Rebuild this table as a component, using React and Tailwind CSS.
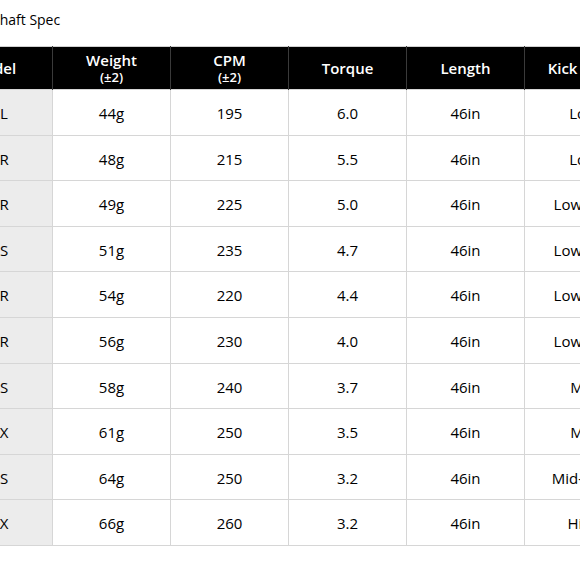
const rows = [
  { model: '40 L', weight: '44g', cpm: '195', torque: '6.0', length: '46in', kick: 'Low' },
  { model: '40 R', weight: '48g', cpm: '215', torque: '5.5', length: '46in', kick: 'Low' },
  { model: '50 R', weight: '49g', cpm: '225', torque: '5.0', length: '46in', kick: 'Low-Mid' },
  { model: '50 S', weight: '51g', cpm: '235', torque: '4.7', length: '46in', kick: 'Low-Mid' },
  { model: '55 R', weight: '54g', cpm: '220', torque: '4.4', length: '46in', kick: 'Low-Mid' },
  { model: '55 R', weight: '56g', cpm: '230', torque: '4.0', length: '46in', kick: 'Low-Mid' },
  { model: '60 S', weight: '58g', cpm: '240', torque: '3.7', length: '46in', kick: 'Mid' },
  { model: '60 X', weight: '61g', cpm: '250', torque: '3.5', length: '46in', kick: 'Mid' },
  { model: '65 S', weight: '64g', cpm: '250', torque: '3.2', length: '46in', kick: 'Mid-High' },
  { model: '65 X', weight: '66g', cpm: '260', torque: '3.2', length: '46in', kick: 'High' },
];

function HeadCell({ title, sub }) {
  return <th className="w-[118px] border-x border-[#3a3a3a] p-0 text-center align-middle font-semibold">
    <div className="text-[15px] leading-[17px]">{title}</div>
    {sub && <div className="text-[13px] leading-[16px]">{sub}</div>}
  </th>
}

function App() {
  return <div
    className="h-[580px] w-[580px] overflow-hidden bg-white text-black"
    style={{ fontFamily: '"Open Sans", "Noto Sans CJK KR", sans-serif' }}
  >
    <div className="ml-[-66px] w-[720px]">
      <h1 className="pl-[58px] pt-[9px] text-[14px] font-normal leading-[22px]">Shaft Spec</h1>
      <table className="mt-[15px] table-fixed border-collapse border-t border-[#d0d0d0]">
        <thead>
          <tr className="h-[43px] bg-black text-white">
            <HeadCell title="Model" />
            <HeadCell title="Weight" sub="(±2)" />
            <HeadCell title="CPM" sub="(±2)" />
            <HeadCell title="Torque" />
            <HeadCell title="Length" />
            <HeadCell title="Kick Point" />
          </tr>
        </thead>
        <tbody className="text-[15px]">
          {rows.map((r, i) => (
            <tr key={i} className="h-[45.6px]">
              <td className="border border-[#d6d6d6] bg-[#ececec] p-0 pt-[2px] text-center">{r.model}</td>
              <td className="border border-[#d6d6d6] p-0 pt-[2px] text-center">{r.weight}</td>
              <td className="border border-[#d6d6d6] p-0 pt-[2px] text-center">{r.cpm}</td>
              <td className="border border-[#d6d6d6] p-0 pt-[2px] text-center">{r.torque}</td>
              <td className="border border-[#d6d6d6] p-0 pt-[2px] text-center">{r.length}</td>
              <td className="border border-[#d6d6d6] p-0 pt-[2px] text-center">{r.kick}</td>
            </tr>
          ))}
        </tbody>
      </table>
    </div>
  </div>
}

export default App;
